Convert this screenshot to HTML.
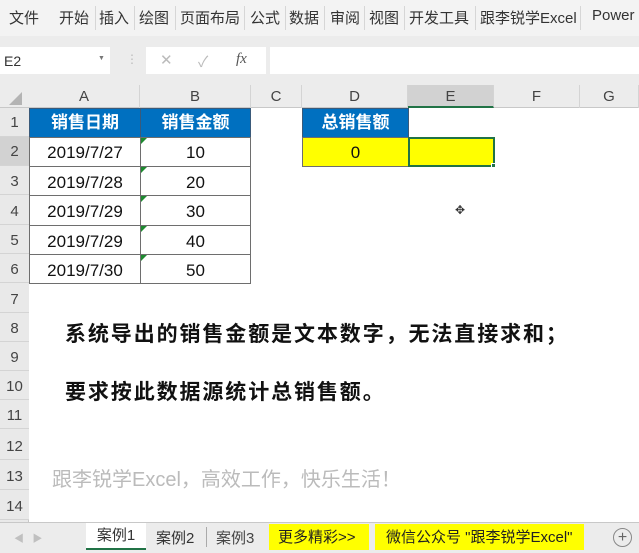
<!DOCTYPE html><html><head><meta charset="utf-8"><style>
*{margin:0;padding:0;box-sizing:border-box}
body{width:639px;height:553px;overflow:hidden;background:#fff;font-family:"Liberation Sans","Noto Sans CJK SC",sans-serif;position:relative}
.a{position:absolute}
.tab{position:absolute;top:7px;font-size:15px;color:#333;white-space:nowrap}
.sep{position:absolute;top:6px;width:1px;height:24px;background:#d6d6d6}
.ch{position:absolute;top:85px;height:23px;font-size:15px;color:#444;text-align:center;line-height:23px;border-right:1px solid #d4d4d4}
.rh{position:absolute;left:0;width:29px;font-size:15px;color:#444;text-align:center;border-bottom:1px solid #d4d4d4;background:#e9e9e9}
.c{position:absolute;font-size:17px;text-align:center;color:#111}
.hd{background:#0070c0;color:#fff;font-weight:bold;border:1px solid #3a5a7a}
.bd{border:1px solid #6e6e6e;background:#fff}
.tri{position:absolute;width:0;height:0;border-top:6px solid #1e8a30;border-right:6px solid transparent}
.big{position:absolute;left:65px;font-size:21px;letter-spacing:1.9px;font-weight:bold;color:#111;white-space:nowrap}
</style></head><body>
<div class="a" style="left:0;top:0;width:639px;height:36px;background:#f3f3f3"></div>
<div class="a" style="left:0;top:36px;width:639px;height:49px;background:#ececec"></div>
<span class="tab" style="left:9px">文件</span><span class="tab" style="left:59px">开始</span>
<div class="sep" style="left:95px"></div><span class="tab" style="left:99px">插入</span>
<div class="sep" style="left:134px"></div><span class="tab" style="left:139px">绘图</span>
<div class="sep" style="left:175px"></div><span class="tab" style="left:180px">页面布局</span>
<div class="sep" style="left:244px"></div><span class="tab" style="left:250px">公式</span>
<div class="sep" style="left:285px"></div><span class="tab" style="left:289px">数据</span>
<div class="sep" style="left:324px"></div><span class="tab" style="left:330px">审阅</span>
<div class="sep" style="left:364px"></div><span class="tab" style="left:369px">视图</span>
<div class="sep" style="left:404px"></div><span class="tab" style="left:409px">开发工具</span>
<div class="sep" style="left:475px"></div><span class="tab" style="left:480px">跟李锐学Excel</span>
<div class="sep" style="left:580px"></div><span class="tab" style="left:592px">Power</span>
<div class="a" style="left:0;top:47px;width:110px;height:27px;background:#fff;font-size:14px;color:#333;padding:6px 0 0 4px">E2<span style="position:absolute;left:98px;top:8px;font-size:7px;color:#777">▼</span></div>
<div class="a" style="left:126px;top:52px;color:#bbb;font-size:12px">⋮</div>
<div class="a" style="left:146px;top:47px;width:120px;height:27px;background:#fff;color:#bbb;font-size:15px;padding-top:4px"><span style="position:absolute;left:14px">✕</span><span style="position:absolute;left:52px">✓</span><span style="position:absolute;left:90px;color:#555;font-family:'Liberation Serif';font-style:italic">fx</span></div>
<div class="a" style="left:270px;top:47px;width:369px;height:27px;background:#fff"></div>
<div class="a" style="left:0;top:85px;width:639px;height:23px;background:#ececec;border-bottom:1px solid #c8c8c8"></div>
<div class="a" style="left:9px;top:92px;width:0;height:0;border-bottom:13px solid #b4b4b4;border-left:13px solid transparent"></div>
<div class="ch" style="left:29px;width:111px">A</div><div class="ch" style="left:140px;width:111px">B</div>
<div class="ch" style="left:251px;width:51px">C</div><div class="ch" style="left:302px;width:106px">D</div>
<div class="ch" style="left:408px;width:86px;background:#d2d2d2;border-bottom:2px solid #217346">E</div>
<div class="ch" style="left:494px;width:86px">F</div><div class="ch" style="left:580px;width:59px">G</div>
<div class="a" style="left:0;top:108px;width:29px;height:414px;background:#e9e9e9;border-right:1px solid #c8c8c8"></div>
<div class="rh" style="top:108px;height:29px;line-height:29px">1</div>
<div class="rh" style="top:137px;height:29px;line-height:29px;background:#d2d2d2">2</div>
<div class="rh" style="top:166px;height:29px;line-height:32px">3</div>
<div class="rh" style="top:195px;height:30px;line-height:33px">4</div>
<div class="rh" style="top:225px;height:29px;line-height:32px">5</div>
<div class="rh" style="top:254px;height:29px;line-height:32px">6</div>
<div class="rh" style="top:283px;height:30px;line-height:33px">7</div>
<div class="rh" style="top:313px;height:29px;line-height:32px">8</div>
<div class="rh" style="top:342px;height:29px;line-height:32px">9</div>
<div class="rh" style="top:371px;height:29px;line-height:32px">10</div>
<div class="rh" style="top:400px;height:29px;line-height:32px">11</div>
<div class="rh" style="top:429px;height:31px;line-height:35px">12</div>
<div class="rh" style="top:460px;height:30px;line-height:33px">13</div>
<div class="rh" style="top:490px;height:30px;line-height:33px">14</div>
<div class="c hd" style="left:29px;top:108px;width:112px;height:30px;line-height:28px">销售日期</div>
<div class="c hd" style="left:140px;top:108px;width:111px;height:30px;line-height:28px">销售金额</div>
<div class="c hd" style="left:302px;top:108px;width:107px;height:30px;line-height:28px">总销售额</div>
<div class="c bd" style="left:29px;top:137px;width:112px;height:30px;line-height:29px">2019/7/27</div>
<div class="c bd" style="left:140px;top:137px;width:111px;height:30px;line-height:29px">10</div>
<div class="c bd" style="left:29px;top:166px;width:112px;height:30px;line-height:31px">2019/7/28</div>
<div class="c bd" style="left:140px;top:166px;width:111px;height:30px;line-height:31px">20</div>
<div class="c bd" style="left:29px;top:195px;width:112px;height:31px;line-height:32px">2019/7/29</div>
<div class="c bd" style="left:140px;top:195px;width:111px;height:31px;line-height:32px">30</div>
<div class="c bd" style="left:29px;top:225px;width:112px;height:30px;line-height:31px">2019/7/29</div>
<div class="c bd" style="left:140px;top:225px;width:111px;height:30px;line-height:31px">40</div>
<div class="c bd" style="left:29px;top:254px;width:112px;height:30px;line-height:31px">2019/7/30</div>
<div class="c bd" style="left:140px;top:254px;width:111px;height:30px;line-height:31px">50</div>
<div class="tri" style="left:141px;top:138px"></div><div class="tri" style="left:141px;top:167px"></div>
<div class="tri" style="left:141px;top:196px"></div><div class="tri" style="left:141px;top:226px"></div>
<div class="tri" style="left:141px;top:255px"></div>
<div class="c" style="left:302px;top:137px;width:107px;height:30px;line-height:29px;background:#ff0;border:1px solid #6e6e6e">0</div>
<div class="a" style="left:408px;top:137px;width:87px;height:30px;background:#ff0;border:2px solid #217346"></div>
<div class="a" style="left:491px;top:163px;width:5px;height:5px;background:#217346;border:1px solid #fff"></div>
<div class="a" style="left:455px;top:203px;font-size:12px;color:#333">✥</div>
<div class="big" style="top:318px">系统导出的销售金额是文本数字，无法直接求和；</div>
<div class="big" style="top:376px">要求按此数据源统计总销售额。</div>
<div class="a" style="left:52px;top:463px;font-size:20px;color:#bbb;white-space:nowrap">跟李锐学Excel，高效工作，快乐生活！</div>
<div class="a" style="left:0;top:522px;width:639px;height:31px;background:#ececec;border-top:1px solid #c8c8c8"></div>
<div class="a" style="left:14px;top:530px;font-size:10px;color:#c0c0c0">◀ &nbsp; ▶</div>
<div class="a" style="left:86px;top:523px;width:60px;height:27px;background:#fff;border-bottom:2px solid #217346;font-size:15px;color:#333;text-align:center;line-height:26px">案例1</div>
<div class="a" style="left:156px;top:527px;font-size:15px;color:#333">案例2</div>
<div class="a" style="left:206px;top:527px;width:1px;height:20px;background:#aaa"></div>
<div class="a" style="left:216px;top:527px;font-size:15px;color:#444">案例3</div>
<div class="a" style="left:269px;top:524px;width:100px;height:26px;background:#ff0;font-size:15px;color:#222;padding:2px 0 0 9px">更多精彩&gt;&gt;</div>
<div class="a" style="left:375px;top:524px;width:209px;height:26px;background:#ff0;font-size:15px;color:#222;padding:2px 0 0 11px">微信公众号 "跟李锐学Excel"</div>
<div class="a" style="left:613px;top:528px;width:19px;height:19px;border:1px solid #888;border-radius:50%;font-size:16px;color:#666;text-align:center;line-height:17px">+</div>
</body></html>
